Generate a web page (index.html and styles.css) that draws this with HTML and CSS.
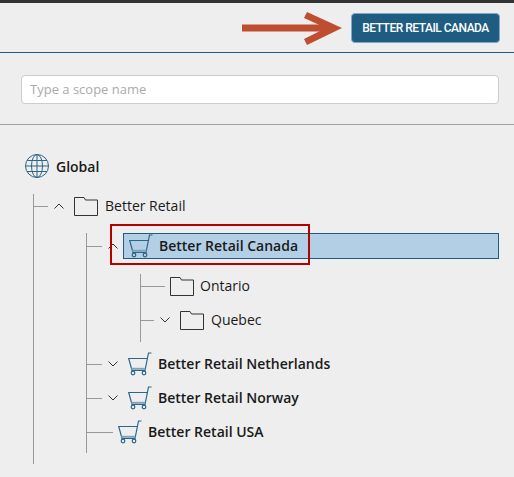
FILE: index.html
```html
<!DOCTYPE html>
<html lang="en">

<head>
    <meta charset="UTF-8">
    <meta name="viewport" content="width=device-width, initial-scale=1.0">
    <title>Scopes</title>
    <link rel="stylesheet" href="styles.css">
</head>

<body>
    <!-- Header -->
    <header class="top-bar">
        <svg class="arrow" width="100" height="34" viewBox="0 0 100 34">
            <rect x="0" y="12.500" width="86" height="7"></rect>
            <polygon points="65,0 100,16 65,33 62,27 84,16 62,6"></polygon>
        </svg>
        <button class="scope-button">BETTER RETAIL CANADA</button>
    </header>

    <!-- Search -->
    <div class="search-bar">
        <input type="text" class="search-input" placeholder="Type a scope name">
    </div>

    <!-- Icons used by the tree -->
    <svg class="icon-defs" width="0" height="0">
        <symbol id="cart" viewBox="0 0 24 24">
            <path class="cart-line" d="M23.500 1H20.500L17 18.500H4L.7 6.500H19.300"></path>
            <path class="cart-band" d="M3.300 16.800H17.300"></path>
            <circle class="cart-line" cx="5" cy="21" r="1.800"></circle>
            <circle class="cart-line" cx="16" cy="21" r="1.800"></circle>
        </symbol>
        <symbol id="folder" viewBox="0 0 24 19">
            <path d="M.5.500H10L11.500 3H23.500V18.500H.5Z"></path>
        </symbol>
        <symbol id="chev-down" viewBox="0 0 10 6">
            <path d="M.5.500L5 5L9.500.5"></path>
        </symbol>
        <symbol id="chev-up" viewBox="0 0 10 6">
            <path d="M.5 5.500L5 1L9.500 5.500"></path>
        </symbol>
    </svg>

    <!-- Tree -->
    <main class="tree-panel">
        <div class="global-row">
            <svg class="globe" width="24" height="24" viewBox="0 0 24 24">
                <circle cx="12" cy="12" r="11.500"></circle>
                <ellipse cx="12" cy="12" rx="5.500" ry="11.500"></ellipse>
                <path d="M12 .5V23.500M2 6.500H22M.5 12H23.500M2 17.500H22"></path>
            </svg>
            <span class="name strong">Global</span>
        </div>

        <ul class="tree level-1">
            <li>
                <div class="row first">
                    <span class="branch b14"></span>
                    <svg class="chev"><use href="#chev-up"></use></svg>
                    <svg class="folder"><use href="#folder"></use></svg>
                    <span class="name">Better Retail</span>
                </div>

                <ul class="tree level-2">
                    <li>
                        <div class="row selected-row">
                            <span class="branch b15"></span>
                            <svg class="chev tight"><use href="#chev-up"></use></svg>
                            <div class="selected">
                                <svg class="cart"><use href="#cart"></use></svg>
                                <span class="name strong">Better Retail Canada</span>
                                <div class="callout"></div>
                            </div>
                        </div>

                        <ul class="tree level-3">
                            <li>
                                <div class="row first">
                                    <span class="branch b24"></span>
                                    <svg class="folder leaf"><use href="#folder"></use></svg>
                                    <span class="name">Ontario</span>
                                </div>
                            </li>
                            <li>
                                <div class="row">
                                    <span class="branch b13"></span>
                                    <svg class="chev"><use href="#chev-down"></use></svg>
                                    <svg class="folder"><use href="#folder"></use></svg>
                                    <span class="name">Quebec</span>
                                </div>
                            </li>
                        </ul>
                    </li>
                    <li>
                        <div class="row">
                            <span class="branch b15"></span>
                            <svg class="chev"><use href="#chev-down"></use></svg>
                            <svg class="cart"><use href="#cart"></use></svg>
                            <span class="name strong">Better Retail Netherlands</span>
                        </div>
                    </li>
                    <li>
                        <div class="row">
                            <span class="branch b15"></span>
                            <svg class="chev"><use href="#chev-down"></use></svg>
                            <svg class="cart"><use href="#cart"></use></svg>
                            <span class="name strong">Better Retail Norway</span>
                        </div>
                    </li>
                    <li>
                        <div class="row">
                            <span class="branch b26"></span>
                            <svg class="cart leaf"><use href="#cart"></use></svg>
                            <span class="name strong">Better Retail USA</span>
                        </div>
                    </li>
                </ul>
            </li>
        </ul>
    </main>
</body>

</html>
```

FILE: styles.css
```css
/* Reset and Global Styles */
* {
    margin: 0;
    padding: 0;
    box-sizing: border-box;
}

html,
body {
    height: 100%;
    overflow: hidden;
}

body {
    font-family: "Open Sans", sans-serif;
    font-size: 14px;
    color: #1a1a1a;
    background-color: #eeeeee;
}

ul {
    list-style: none;
}

.icon-defs {
    display: block;
    height: 0;
}

/* Header */
.top-bar {
    height: 53px;
    padding-right: 14px;
    display: flex;
    justify-content: flex-end;
    align-items: center;
    gap: 9px;
    border-top: 3px solid #333333;
    border-bottom: 1px solid #1f5c82;
}

.arrow {
    margin-top: 2px;
    fill: #bf4d30;
}

.scope-button {
    width: 149px;
    height: 30px;
    font-family: Roboto, sans-serif;
    font-size: 12px;
    font-weight: 500;
    letter-spacing: -0.500px;
    color: white;
    background-color: #1f5c82;
    border: 1px solid #7fa9c9;
    border-radius: 4px;
}

/* Search */
.search-bar {
    height: 72px;
    padding: 22px 15px 0 21px;
    border-bottom: 1px solid #a0a0a0;
}

.search-input {
    width: 100%;
    height: 29px;
    padding: 0 8px 2px;
    font-family: "Open Sans", sans-serif;
    font-size: 13px;
    background-color: white;
    border: 1px solid #cccccc;
    border-radius: 4px;
}

.search-input::placeholder {
    color: #aaaaaa;
}

/* Tree */
.tree-panel {
    padding: 29px 0 0 25px;
}

.global-row {
    height: 24px;
    display: flex;
    align-items: center;
    gap: 7px;
}

.globe {
    fill: none;
    stroke: #2b6588;
}

.name {
    white-space: nowrap;
}

.row .name {
    padding-bottom: 2px;
}

.strong {
    font-weight: 600;
}

.tree {
    border-left: 1px solid #999999;
}

.level-1 {
    margin: 16px 0 0 8px;
    padding-bottom: 11px;
}

.level-2 {
    margin: 15px 0 0 52px;
    padding-bottom: 4px;
}

.level-3 {
    margin: 15px 0 5px 53px;
    padding-bottom: 5px;
}

.row {
    height: 34px;
    display: flex;
    align-items: center;
}

.row.first {
    height: 24px;
    margin-bottom: 5px;
}

.row.selected-row {
    height: 26px;
}

.branch {
    height: 1px;
    flex-shrink: 0;
    background-color: #999999;
}

.b13 { width: 13px; }
.b14 { width: 14px; }
.b15 { width: 15px; }
.b24 { width: 24px; }
.b26 { width: 26px; }

.chev {
    width: 10px;
    height: 6px;
    margin: 0 10px 0 6px;
    flex-shrink: 0;
    fill: none;
    stroke: #333333;
}

.chev.tight {
    margin-right: 5px;
}

.folder {
    width: 24px;
    height: 19px;
    margin-right: 7px;
    flex-shrink: 0;
    fill: none;
    stroke: #333333;
}

.folder.leaf {
    margin-left: 5px;
    margin-right: 6px;
}

.cart {
    width: 24px;
    height: 24px;
    margin-right: 6px;
    flex-shrink: 0;
}

.cart.leaf {
    margin-left: 5px;
}

.cart-line {
    fill: none;
    stroke: #2b6588;
    stroke-width: 1.200;
}

.cart-band {
    fill: none;
    stroke: #7fa3bb;
    stroke-width: 2;
}

/* Selected node */
.selected {
    position: relative;
    width: 376px;
    height: 26px;
    padding-left: 5px;
    display: flex;
    align-items: center;
    background-color: #b3cfe6;
    border: 1px solid #1f5c82;
}

.callout {
    position: absolute;
    left: -14px;
    top: -10px;
    width: 200px;
    height: 41px;
    border: 2px solid #b50000;
}
```
